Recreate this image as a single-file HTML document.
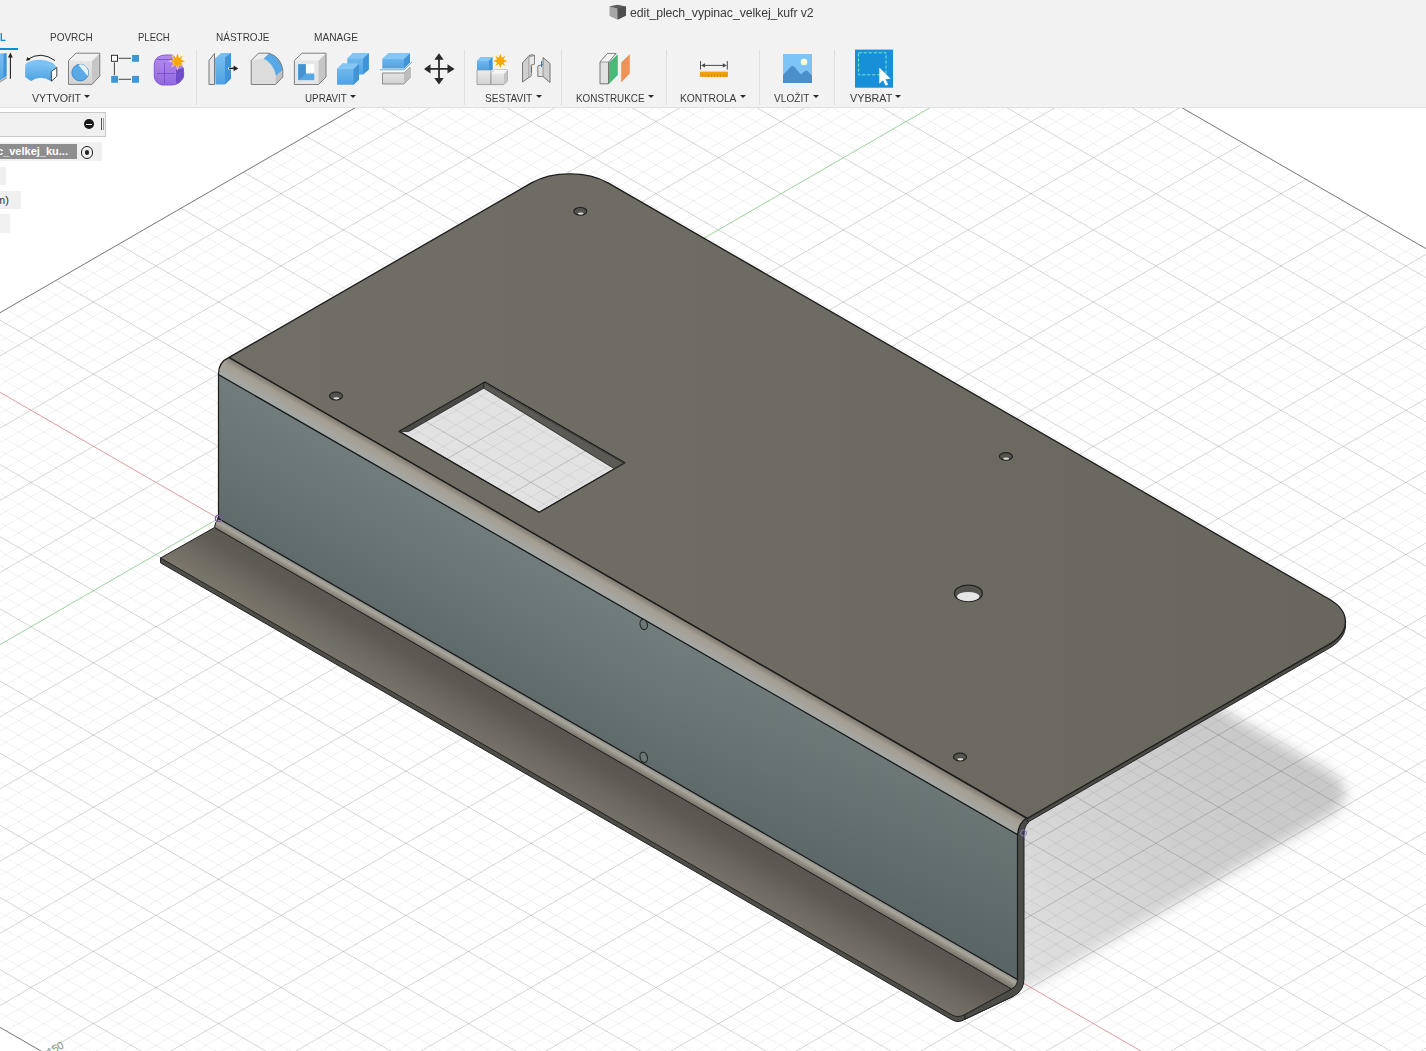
<!DOCTYPE html>
<html><head><meta charset="utf-8"><title>edit_plech_vypinac_velkej_kufr v2</title>
<style>
html,body{margin:0;padding:0;}
body{width:1426px;height:1051px;overflow:hidden;background:#fff;position:relative;font-family:"Liberation Sans",sans-serif;}
#scene{position:absolute;left:0;top:0;width:1426px;height:1051px;}
#toolbar{position:absolute;left:0;top:0;width:1426px;height:107px;background:#f2f2f2;border-bottom:1px solid #e0e0e0;}
.title{position:absolute;left:630px;top:6px;font-size:12px;color:#3c3c3c;white-space:nowrap;letter-spacing:-0.1px;}
.tab{position:absolute;top:31px;font-size:10.5px;color:#3a3a3a;white-space:nowrap;}
.lbl{position:absolute;top:92px;font-size:10.5px;color:#3a3a3a;white-space:nowrap;}
.tab span,.lbl span,.title span{display:inline-block;transform-origin:0 50%;}
.arr{position:absolute;top:95.3px;width:0;height:0;border-left:3.1px solid transparent;border-right:3.1px solid transparent;border-top:3.8px solid #2a2a2a;}
.sep{position:absolute;top:50px;width:1px;height:55px;background:#dedede;}
.ico{position:absolute;top:51px;width:36px;height:36px;}
#browser div{position:absolute;}
</style></head><body>
<svg id="scene" width="1426" height="1051" viewBox="0 0 1426 1051">
<defs>
<clipPath id="gclip"><polygon points="-619.0,670.0 768.5,-130.9 3556.0,1478.2 2168.5,2279.2"/></clipPath>
<filter id="blur" x="-20%" y="-20%" width="140%" height="140%"><feGaussianBlur stdDeviation="6.5"/></filter>
<linearGradient id="faceg" gradientUnits="userSpaceOnUse" x1="218.5" y1="374.5" x2="156.1" y2="482.5">
<stop offset="0" stop-color="#717d7c"/><stop offset="0.5" stop-color="#687574"/><stop offset="1" stop-color="#5f6b6b"/>
</linearGradient>
<linearGradient id="facelr" gradientUnits="userSpaceOnUse" x1="218" y1="0" x2="1018" y2="0">
<stop offset="0" stop-color="#000" stop-opacity="0"/><stop offset="0.55" stop-color="#000" stop-opacity="0"/><stop offset="1" stop-color="#000" stop-opacity="0.07"/>
</linearGradient>
<linearGradient id="plateg" gradientUnits="userSpaceOnUse" x1="230" y1="0" x2="1345" y2="0">
<stop offset="0" stop-color="#716e66"/><stop offset="0.5" stop-color="#6e6b62"/><stop offset="1" stop-color="#69665e"/>
</linearGradient>
<linearGradient id="flg" gradientUnits="userSpaceOnUse" x1="160" y1="0" x2="1012" y2="0">
<stop offset="0" stop-color="#7c786e"/><stop offset="0.4" stop-color="#76726a"/><stop offset="1" stop-color="#777269"/>
</linearGradient>
<linearGradient id="flao" gradientUnits="userSpaceOnUse" x1="214.5" y1="527.5" x2="187.8" y2="573.7">
<stop offset="0" stop-color="#000" stop-opacity="0.25"/><stop offset="0.26" stop-color="#000" stop-opacity="0.22"/><stop offset="0.43" stop-color="#000" stop-opacity="0.165"/><stop offset="0.64" stop-color="#000" stop-opacity="0.095"/><stop offset="0.84" stop-color="#000" stop-opacity="0.045"/><stop offset="1" stop-color="#000" stop-opacity="0.01"/>
</linearGradient>
<linearGradient id="shg" gradientUnits="userSpaceOnUse" x1="1030" y1="960" x2="1290" y2="760">
<stop offset="0" stop-color="#dedede"/><stop offset="0.6" stop-color="#cecece"/><stop offset="1" stop-color="#c8c8c8"/>
</linearGradient>
<linearGradient id="bendg" gradientUnits="userSpaceOnUse" x1="229.1" y1="357.4" x2="218" y2="376.6">
<stop offset="0" stop-color="#7d786e"/><stop offset="0.3" stop-color="#a49e93"/><stop offset="0.6" stop-color="#a6a49c"/><stop offset="0.85" stop-color="#a3a8a6"/><stop offset="1" stop-color="#899190"/>
</linearGradient>
<linearGradient id="bend2g" gradientUnits="userSpaceOnUse" x1="218.5" y1="518.5" x2="213.6" y2="527">
<stop offset="0" stop-color="#868b89"/><stop offset="0.4" stop-color="#aaa69c"/><stop offset="1" stop-color="#7d796f"/>
</linearGradient>
</defs>
<rect width="1426" height="1051" fill="#fff"/>
<!-- shadow -->
<g clip-path="url(#gclip)">
<path d="M229.1,529.4L531.0,355.1C552.4,342.8 587.1,342.8 608.5,355.1L1329.4,771.3C1350.8,783.7 1350.8,803.7 1329.4,816.1L1027.5,990.3Z" fill="url(#shg)" filter="url(#blur)"/>
<path d="M399.2,431.4L484.9,382.0L624.9,462.8L539.2,512.3Z" fill="#e2e2e2"/>
</g>
<!-- grid -->
<g clip-path="url(#gclip)" fill="none">
<path d="M-20.0,1015.8L1446.0,1862.2M-20.0,1001.4L1446.0,1847.8M-20.0,987.0L1446.0,1833.4M-20.0,972.5L1446.0,1818.9M-20.0,943.7L1446.0,1790.1M-20.0,929.3L1446.0,1775.6M-20.0,914.8L1446.0,1761.2M-20.0,900.4L1446.0,1746.8M-20.0,871.5L1446.0,1717.9M-20.0,857.1L1446.0,1703.5M-20.0,842.7L1446.0,1689.0M-20.0,828.2L1446.0,1674.6M-20.0,799.4L1446.0,1645.8M-20.0,784.9L1446.0,1631.3M-20.0,770.5L1446.0,1616.9M-20.0,756.1L1446.0,1602.5M-20.0,727.2L1446.0,1573.6M-20.0,712.8L1446.0,1559.2M-20.0,698.3L1446.0,1544.7M-20.0,683.9L1446.0,1530.3M-20.0,655.0L1446.0,1501.4M-20.0,640.6L1446.0,1487.0M-20.0,626.2L1446.0,1472.6M-20.0,611.7L1446.0,1458.1M-20.0,582.9L1446.0,1429.3M-20.0,568.4L1446.0,1414.8M-20.0,554.0L1446.0,1400.4M-20.0,539.6L1446.0,1386.0M-20.0,510.7L1446.0,1357.1M-20.0,496.3L1446.0,1342.7M-20.0,481.8L1446.0,1328.2M-20.0,467.4L1446.0,1313.8M-20.0,438.5L1446.0,1284.9M-20.0,424.1L1446.0,1270.5M-20.0,409.7L1446.0,1256.1M-20.0,395.2L1446.0,1241.6M-20.0,366.4L1446.0,1212.8M-20.0,351.9L1446.0,1198.3M-20.0,337.5L1446.0,1183.9M-20.0,323.1L1446.0,1169.5M-20.0,294.2L1446.0,1140.6M-20.0,279.8L1446.0,1126.2M-20.0,265.3L1446.0,1111.7M-20.0,250.9L1446.0,1097.3M-20.0,222.0L1446.0,1068.4M-20.0,207.6L1446.0,1054.0M-20.0,193.2L1446.0,1039.6M-20.0,178.7L1446.0,1025.1M-20.0,149.9L1446.0,996.3M-20.0,135.4L1446.0,981.8M-20.0,121.0L1446.0,967.4M-20.0,106.6L1446.0,953.0M-20.0,77.7L1446.0,924.1M-20.0,63.3L1446.0,909.7M-20.0,48.8L1446.0,895.2M-20.0,34.4L1446.0,880.8M-20.0,5.5L1446.0,851.9M-20.0,-8.9L1446.0,837.5M-20.0,-23.3L1446.0,823.1M-20.0,-37.8L1446.0,808.6M-20.0,-66.6L1446.0,779.8M-20.0,-81.0L1446.0,765.3M-20.0,-95.5L1446.0,750.9M-20.0,-109.9L1446.0,736.5M-20.0,-138.8L1446.0,707.6M-20.0,-153.2L1446.0,693.2M-20.0,-167.6L1446.0,678.7M-20.0,-182.1L1446.0,664.3M-20.0,-210.9L1446.0,635.4M-20.0,-225.4L1446.0,621.0M-20.0,-239.8L1446.0,606.6M-20.0,-254.2L1446.0,592.2M-20.0,-283.1L1446.0,563.3M-20.0,-297.5L1446.0,548.9M-20.0,-312.0L1446.0,534.4M-20.0,-326.4L1446.0,520.0M-20.0,-355.3L1446.0,491.1M-20.0,-369.7L1446.0,476.7M-20.0,-384.1L1446.0,462.3M-20.0,-398.6L1446.0,447.8M-20.0,-427.4L1446.0,419.0M-20.0,-441.9L1446.0,404.5M-20.0,-456.3L1446.0,390.1M-20.0,-470.7L1446.0,375.7M-20.0,-499.6L1446.0,346.8M-20.0,-514.0L1446.0,332.4M-20.0,-528.5L1446.0,317.9M-20.0,-542.9L1446.0,303.5M-20.0,-571.8L1446.0,274.6M-20.0,-586.2L1446.0,260.2M-20.0,324.2L1446.0,-522.2M-20.0,338.7L1446.0,-507.7M-20.0,353.1L1446.0,-493.3M-20.0,382.0L1446.0,-464.4M-20.0,396.4L1446.0,-450.0M-20.0,410.8L1446.0,-435.6M-20.0,425.3L1446.0,-421.1M-20.0,454.1L1446.0,-392.3M-20.0,468.6L1446.0,-377.8M-20.0,483.0L1446.0,-363.4M-20.0,497.4L1446.0,-349.0M-20.0,526.3L1446.0,-320.1M-20.0,540.7L1446.0,-305.7M-20.0,555.2L1446.0,-291.2M-20.0,569.6L1446.0,-276.8M-20.0,598.5L1446.0,-247.9M-20.0,612.9L1446.0,-233.5M-20.0,627.3L1446.0,-219.1M-20.0,641.8L1446.0,-204.6M-20.0,670.6L1446.0,-175.8M-20.0,685.1L1446.0,-161.3M-20.0,699.5L1446.0,-146.9M-20.0,713.9L1446.0,-132.5M-20.0,742.8L1446.0,-103.6M-20.0,757.2L1446.0,-89.2M-20.0,771.7L1446.0,-74.7M-20.0,786.1L1446.0,-60.3M-20.0,815.0L1446.0,-31.4M-20.0,829.4L1446.0,-17.0M-20.0,843.8L1446.0,-2.6M-20.0,858.3L1446.0,11.9M-20.0,887.1L1446.0,40.7M-20.0,901.6L1446.0,55.2M-20.0,916.0L1446.0,69.6M-20.0,930.4L1446.0,84.0M-20.0,959.3L1446.0,112.9M-20.0,973.7L1446.0,127.3M-20.0,988.2L1446.0,141.8M-20.0,1002.6L1446.0,156.2M-20.0,1031.5L1446.0,185.1M-20.0,1045.9L1446.0,199.5M-20.0,1060.3L1446.0,213.9M-20.0,1074.8L1446.0,228.4M-20.0,1103.6L1446.0,257.2M-20.0,1118.0L1446.0,271.7M-20.0,1132.5L1446.0,286.1M-20.0,1146.9L1446.0,300.5M-20.0,1175.8L1446.0,329.4M-20.0,1190.2L1446.0,343.8M-20.0,1204.6L1446.0,358.3M-20.0,1219.1L1446.0,372.7M-20.0,1247.9L1446.0,401.6M-20.0,1262.4L1446.0,416.0M-20.0,1276.8L1446.0,430.4M-20.0,1291.2L1446.0,444.8M-20.0,1320.1L1446.0,473.7M-20.0,1334.5L1446.0,488.1M-20.0,1349.0L1446.0,502.6M-20.0,1363.4L1446.0,517.0M-20.0,1392.3L1446.0,545.9M-20.0,1406.7L1446.0,560.3M-20.0,1421.1L1446.0,574.7M-20.0,1435.6L1446.0,589.2M-20.0,1464.4L1446.0,618.0M-20.0,1478.9L1446.0,632.5M-20.0,1493.3L1446.0,646.9M-20.0,1507.7L1446.0,661.3M-20.0,1536.6L1446.0,690.2M-20.0,1551.0L1446.0,704.6M-20.0,1565.5L1446.0,719.1M-20.0,1579.9L1446.0,733.5M-20.0,1608.8L1446.0,762.4M-20.0,1623.2L1446.0,776.8M-20.0,1637.6L1446.0,791.2M-20.0,1652.1L1446.0,805.7M-20.0,1680.9L1446.0,834.5M-20.0,1695.4L1446.0,849.0M-20.0,1709.8L1446.0,863.4M-20.0,1724.2L1446.0,877.8M-20.0,1753.1L1446.0,906.7M-20.0,1767.5L1446.0,921.1M-20.0,1782.0L1446.0,935.6M-20.0,1796.4L1446.0,950.0M-20.0,1825.3L1446.0,978.9M-20.0,1839.7L1446.0,993.3M-20.0,1854.1L1446.0,1007.7M-20.0,1868.6L1446.0,1022.2M-20.0,1897.4L1446.0,1051.0M-20.0,1911.9L1446.0,1065.5M-20.0,1926.3L1446.0,1079.9M-20.0,1940.7L1446.0,1094.3M-20.0,1969.6L1446.0,1123.2M-20.0,1984.0L1446.0,1137.6M-20.0,1998.5L1446.0,1152.1M-20.0,2012.9L1446.0,1166.5M-20.0,2041.8L1446.0,1195.4M-20.0,2056.2L1446.0,1209.8M-20.0,2070.6L1446.0,1224.2M-20.0,2085.1L1446.0,1238.7M-20.0,2113.9L1446.0,1267.5M-20.0,2128.4L1446.0,1282.0M-20.0,2142.8L1446.0,1296.4M-20.0,2157.2L1446.0,1310.8M-20.0,2186.1L1446.0,1339.7M-20.0,2200.5L1446.0,1354.1M-20.0,2214.9L1446.0,1368.6M-20.0,2229.4L1446.0,1383.0M-20.0,2258.2L1446.0,1411.9M-20.0,2272.7L1446.0,1426.3M-20.0,2287.1L1446.0,1440.7M-20.0,2301.5L1446.0,1455.2M-20.0,2330.4L1446.0,1484.0M-20.0,2344.8L1446.0,1498.4M-20.0,2359.3L1446.0,1512.9M-20.0,2373.7L1446.0,1527.3M-20.0,2402.6L1446.0,1556.2M-20.0,2417.0L1446.0,1570.6M-20.0,2431.4L1446.0,1585.0M-20.0,2445.9L1446.0,1599.5M-20.0,2474.7L1446.0,1628.3M-20.0,2489.2L1446.0,1642.8M-20.0,2503.6L1446.0,1657.2M-20.0,2518.0L1446.0,1671.6M-20.0,2546.9L1446.0,1700.5M-20.0,2561.3L1446.0,1714.9M-20.0,2575.8L1446.0,1729.4M-20.0,2590.2L1446.0,1743.8M-20.0,2619.1L1446.0,1772.7M-20.0,2633.5L1446.0,1787.1M-20.0,2647.9L1446.0,1801.5M-20.0,2662.4L1446.0,1816.0" stroke="#000" stroke-opacity="0.06" stroke-width="1"/>
<path d="M-20.0,958.1L1446.0,1804.5M-20.0,886.0L1446.0,1732.3M-20.0,813.8L1446.0,1660.2M-20.0,741.6L1446.0,1588.0M-20.0,669.5L1446.0,1515.9M-20.0,597.3L1446.0,1443.7M-20.0,525.1L1446.0,1371.5M-20.0,453.0L1446.0,1299.4M-20.0,380.8L1446.0,1227.2M-20.0,308.6L1446.0,1155.0M-20.0,236.5L1446.0,1082.9M-20.0,164.3L1446.0,1010.7M-20.0,92.1L1446.0,938.5M-20.0,20.0L1446.0,866.4M-20.0,-52.2L1446.0,794.2M-20.0,-124.3L1446.0,722.0M-20.0,-196.5L1446.0,649.9M-20.0,-268.7L1446.0,577.7M-20.0,-340.8L1446.0,505.6M-20.0,-413.0L1446.0,433.4M-20.0,-485.2L1446.0,361.2M-20.0,-557.3L1446.0,289.1M-20.0,367.5L1446.0,-478.9M-20.0,439.7L1446.0,-406.7M-20.0,511.9L1446.0,-334.5M-20.0,584.0L1446.0,-262.4M-20.0,656.2L1446.0,-190.2M-20.0,728.4L1446.0,-118.0M-20.0,800.5L1446.0,-45.9M-20.0,872.7L1446.0,26.3M-20.0,944.9L1446.0,98.5M-20.0,1017.0L1446.0,170.6M-20.0,1089.2L1446.0,242.8M-20.0,1161.3L1446.0,315.0M-20.0,1233.5L1446.0,387.1M-20.0,1305.7L1446.0,459.3M-20.0,1377.8L1446.0,531.4M-20.0,1450.0L1446.0,603.6M-20.0,1522.2L1446.0,675.8M-20.0,1594.3L1446.0,747.9M-20.0,1666.5L1446.0,820.1M-20.0,1738.7L1446.0,892.3M-20.0,1810.8L1446.0,964.4M-20.0,1883.0L1446.0,1036.6M-20.0,1955.2L1446.0,1108.8M-20.0,2027.3L1446.0,1180.9M-20.0,2099.5L1446.0,1253.1M-20.0,2171.6L1446.0,1325.3M-20.0,2243.8L1446.0,1397.4M-20.0,2316.0L1446.0,1469.6M-20.0,2388.1L1446.0,1541.7M-20.0,2460.3L1446.0,1613.9M-20.0,2532.5L1446.0,1686.1M-20.0,2604.6L1446.0,1758.2" stroke="#000" stroke-opacity="0.165" stroke-width="1"/>
<path d="M-69.0,352.5L2718.5,1961.7" stroke="#ee7a80" stroke-opacity="0.55" stroke-width="1"/>
<path d="M-331.5,836.0L1056.0,35.0" stroke="#78dc78" stroke-opacity="0.55" stroke-width="1"/>
</g>
<path d="M-619.0,670.0L768.5,-130.9M768.5,-130.9L3556.0,1478.2M-619.0,670.0L2168.5,2279.2" stroke="#777" stroke-width="1" fill="none"/>
<text x="49.5" y="1056" font-family="Liberation Sans, sans-serif" font-size="10.5" fill="#8a8a8a" transform="rotate(-30 49.5 1056)">150</text><text x="-4" y="1010" font-family="Liberation Sans, sans-serif" font-size="10.5" fill="#8a8a8a" transform="rotate(-30 -4 1010)">0</text>

<!-- plate thickness -->
<path d="M229.1,361.4L531.0,187.1C552.4,174.8 587.1,174.8 608.5,187.1L1329.4,603.3C1350.8,615.7 1350.8,635.7 1329.4,648.1L1027.5,822.3Z M399.2,431.4L484.9,382.0L624.9,462.8L539.2,512.3Z" fill-rule="evenodd" fill="#4e4c46" stroke="#222" stroke-width="1" stroke-linejoin="round"/>
<!-- flange -->
<path d="M160.5,558 L160.5,562.8 L951.1,1019.3 Q958,1023.8 964.9,1019.3 L1013,996.5 L1011.5,989 Z" fill="#4f4d47" stroke="#222" stroke-width="1" stroke-linejoin="round"/>
<!-- end face (sheet thickness seen from right) -->
<path d="M1026.5,818.2 L1028.5,822.5 Q1024,826 1024,835 L1024,979 Q1024,991 1013,996.5 L964.9,1019.3 L964.9,1014.5 L1011.5,989 Q1017.5,986 1017.5,979.5 L1017.5,834.5 Q1018,824 1026.5,818.2 Z" fill="#4b4b48" stroke="#222" stroke-width="1" stroke-linejoin="round"/>
<path d="M160.5,558 L214.5,527.5 L1011.5,989 L964.9,1014.5 Q958,1018.5 951.1,1014.5 Z" fill="url(#flg)"/>
<path d="M160.5,558 L214.5,527.5 L1011.5,989 L964.9,1014.5 Q958,1018.5 951.1,1014.5 Z" fill="url(#flao)" stroke="#222" stroke-width="1" stroke-linejoin="round"/>
<!-- lower bend -->
<path d="M218.5,518.5 L1017.5,979.5 Q1017.5,986 1011.5,989 L214.5,527.5 Q215,522 218.5,518.5 Z" fill="url(#bend2g)" stroke="#222" stroke-width="1" stroke-linejoin="round"/>
<!-- vertical face -->
<path d="M218.5,374.5 L1017.5,834.5 L1017.5,979.5 L218.5,518.5 Z" fill="url(#faceg)"/>
<path d="M218.5,374.5 L1017.5,834.5 L1017.5,979.5 L218.5,518.5 Z" fill="url(#facelr)" stroke="#1c1c1c" stroke-width="1.2" stroke-linejoin="round"/>
<!-- upper bend -->
<path d="M229.1,357.4 L1026.5,818.2 Q1019,822 1017.5,834.5 L218.4,374.5 Q218.4,362 229.1,357.4 Z" fill="url(#bendg)" stroke="#1c1c1c" stroke-width="1.2" stroke-linejoin="round"/>
<!-- cutout inner walls: draw plate with hole, then walls -->
<path d="M229.1,357.4L531.0,183.1C552.4,170.8 587.1,170.8 608.5,183.1L1329.4,599.3C1350.8,611.7 1350.8,631.7 1329.4,644.1L1027.5,818.3Z M399.2,431.4L484.9,382.0L624.9,462.8L539.2,512.3Z" fill="url(#plateg)" fill-rule="evenodd" stroke="#1c1c1c" stroke-width="1.3" stroke-linejoin="round"/>
<!-- cutout walls -->
<path d="M398.9,431.6 L483.8,382.7 L483.8,388.2 L408.5,431.6 Z" fill="#4a4945" stroke="#222" stroke-width="0.8"/>
<path d="M483.8,382.7 L623.7,463.2 L614.2,468.7 L483.8,388.2 Z" fill="#5b5a55" stroke="#222" stroke-width="0.8"/>

<!-- holes on plate -->
<g stroke="#222" stroke-width="1.2">
<ellipse cx="580.3" cy="211.3" rx="6.5" ry="3.8" fill="#55534d"/>
<ellipse cx="336" cy="396" rx="6.5" ry="3.8" fill="#55534d"/>
<ellipse cx="1005.9" cy="456.4" rx="6.5" ry="3.8" fill="#55534d"/>
<ellipse cx="960" cy="757" rx="6.5" ry="3.8" fill="#55534d"/>
<ellipse cx="968.4" cy="593.4" rx="14" ry="8.2" fill="#55534d"/>
</g>
<ellipse cx="968.2" cy="596.6" rx="11.3" ry="4.6" fill="#e6e6e6"/>
<ellipse cx="580.6" cy="213.6" rx="3" ry="1.1" fill="#ddd"/>
<ellipse cx="336.3" cy="398.3" rx="3" ry="1.1" fill="#ddd"/>
<ellipse cx="1006.2" cy="458.7" rx="3" ry="1.1" fill="#ddd"/>
<ellipse cx="960.3" cy="759.3" rx="3" ry="1.1" fill="#ddd"/>
<!-- holes on face -->
<g stroke="#222" stroke-width="1.1" fill="#6b7877">
<ellipse cx="643.7" cy="624.5" rx="3.6" ry="5.2" transform="rotate(-15 643.7 624.5)"/>
<ellipse cx="643.7" cy="757.3" rx="3.6" ry="5.2" transform="rotate(-15 643.7 757.3)"/>
</g>
<!-- origin markers -->
<circle cx="218.5" cy="518.5" r="3.2" fill="none" stroke="#7a5aa0" stroke-width="1.2"/>
<circle cx="218.5" cy="518.5" r="1.2" fill="#222"/>
<circle cx="1023.5" cy="833" r="3" fill="none" stroke="#8a78c8" stroke-width="1"/>
</svg>

<div id="toolbar">
<!-- title -->
<svg style="position:absolute;left:608px;top:4px" width="20" height="18" viewBox="0 0 20 18"><path d="M1.8,2.2 L9.5,0.8 L18,2.6 L18,11.5 L9.8,15.6 L1.8,11.8 Z" fill="#5c5c5c"/><path d="M1.8,2.6 L9.6,4.6 L9.8,15.6 L1.8,11.8 Z" fill="#a6a6a6"/><path d="M9.6,4.6 L18,2.6 L18,11.5 L9.8,15.6 Z" fill="#4e4e4e"/></svg>
<div class="title"><span style="transform:scaleX(1.0263)">edit_plech_vypinac_velkej_kufr v2</span></div>
<div class="tab" style="left:-0.5px;color:#0a8fd6;font-weight:bold;"><span style="transform:scaleX(0.9)">L</span></div>
<div class="tab" style="left:50.1px;"><span style="transform:scaleX(0.9488)">POVRCH</span></div>
<div class="tab" style="left:138.0px;"><span style="transform:scaleX(0.9057)">PLECH</span></div>
<div class="tab" style="left:216.4px;"><span style="transform:scaleX(0.9518)">NÁSTROJE</span></div>
<div class="tab" style="left:314.4px;"><span style="transform:scaleX(0.9670)">MANAGE</span></div>
<div style="position:absolute;left:0;top:47.6px;width:18.4px;height:2.4px;background:#0a8fd6"></div>
<div class="lbl" style="left:31.5px"><span style="transform:scaleX(1.0145)">VYTVOřIT</span></div><div class="arr" style="left:84.3px"></div>
<div class="lbl" style="left:304.7px"><span style="transform:scaleX(0.9351)">UPRAVIT</span></div><div class="arr" style="left:350.1px"></div>
<div class="lbl" style="left:484.5px"><span style="transform:scaleX(0.9593)">SESTAVIT</span></div><div class="arr" style="left:535.7px"></div>
<div class="lbl" style="left:576.4px"><span style="transform:scaleX(0.9396)">KONSTRUKCE</span></div><div class="arr" style="left:648.3px"></div>
<div class="lbl" style="left:680.4px"><span style="transform:scaleX(0.9775)">KONTROLA</span></div><div class="arr" style="left:740.3px"></div>
<div class="lbl" style="left:773.9px"><span style="transform:scaleX(0.9647)">VLOŽIT</span></div><div class="arr" style="left:812.5px"></div>
<div class="lbl" style="left:849.5px"><span style="transform:scaleX(1.0267)">VYBRAT</span></div><div class="arr" style="left:895.2px"></div>
<div class="sep" style="left:196px"></div>
<div class="sep" style="left:464.3px"></div>
<div class="sep" style="left:561.3px"></div>
<div class="sep" style="left:665.8px"></div>
<div class="sep" style="left:759.2px"></div>
<div class="sep" style="left:833.6px"></div>
<!--ICONS_START--><svg style="position:absolute;left:0;top:0" width="1426" height="107" viewBox="0 0 1426 107">
<defs>
<linearGradient id="bl" x1="0" y1="0" x2="0" y2="1"><stop offset="0" stop-color="#7cc0f2"/><stop offset="1" stop-color="#4ea2e2"/></linearGradient>
<linearGradient id="gr" x1="0" y1="0" x2="0" y2="1"><stop offset="0" stop-color="#ededed"/><stop offset="1" stop-color="#d2d2d2"/></linearGradient>
<linearGradient id="pu" x1="0" y1="0" x2="0" y2="1"><stop offset="0" stop-color="#b48cf0"/><stop offset="1" stop-color="#9468e0"/></linearGradient>
<g id="star"><path d="M0,-9 L1.8,-3.6 L6.4,-6.4 L3.6,-1.8 L9,0 L3.6,1.8 L6.4,6.4 L1.8,3.6 L0,9 L-1.8,3.6 L-6.4,6.4 L-3.6,1.8 L-9,0 L-3.6,-1.8 L-6.4,-6.4 L-1.8,-3.6 Z" fill="#fff6c0"/><path d="M0,-7.6 L1.6,-3.2 L5.4,-5.4 L3.2,-1.6 L7.6,0 L3.2,1.6 L5.4,5.4 L1.6,3.2 L0,7.6 L-1.6,3.2 L-5.4,5.4 L-3.2,1.6 L-7.6,0 L-3.2,-1.6 L-5.4,-5.4 L-1.6,-3.2 Z" fill="#f7a700"/></g>
</defs>
<!-- 1 extrude (partial) -->
<path d="M-2,53.5 L6.5,53 L6.5,76 L-2,82 Z" fill="url(#bl)"/>
<path d="M3.5,54 L6.5,53 L6.5,76 L3.5,78 Z" fill="#3f94d8"/>
<path d="M-2,82 L6.8,76.5 L6.8,78.5 L-2,84 Z" fill="#a8a8a8"/>
<path d="M10.4,56 L10.4,78.8" stroke="#222" stroke-width="1.1"/><path d="M8,57.6 L10.4,52.4 L12.8,57.6 Z" fill="#222"/>
<!-- 2 revolve -->
<path d="M25.3,64.5 Q26,63 28,62.2 Q40,57 53,63 L56.8,67.2 L56.8,76 L51.4,81.3 Q40.5,74.5 31,81 L25.3,77 Z" fill="#7cc2f4"/>
<path d="M25.3,67.5 Q39,60.5 51.3,68.5 L51.4,81.3 Q40.5,74.5 31,81 L25.3,77 Z" fill="url(#bl)"/>
<path d="M51.3,71.5 L56.8,67.4 L56.8,76.2 L51.5,81.2 Z" fill="#fff" stroke="#333" stroke-width="0.9" stroke-linejoin="round"/>
<path d="M27.5,59.5 Q41,50.5 55,60.5" fill="none" stroke="#222" stroke-width="1"/><path d="M26,60.8 L27.5,57 L30.3,59.9 Z" fill="#222"/>
<!-- 3 hole -->
<path d="M68.5,60.5 L76,53.2 L99.8,53.2 L99.8,76 L92,84.4 L68.5,84.4 Z" fill="url(#gr)"/>
<path d="M92,61 L99.8,53.2 L99.8,76 L92,84.4 Z" fill="#c6c6c6"/>
<path d="M68.5,60.5 L76,53.2 L99.8,53.2 L92,61 Z" fill="#f2f2f2"/>
<path d="M68.5,60.5 L76,53.2 L99.8,53.2 L99.8,76 L92,84.4 L68.5,84.4 Z" fill="none" stroke="#747474" stroke-width="0.9" stroke-linejoin="round"/>
<circle cx="80.2" cy="72.6" r="8.3" fill="#5aaae8" stroke="#3b86c6" stroke-width="0.9"/>
<path d="M80.2,64.3 A8.3,8.3 0 0 1 87.6,76 L78.5,65 Z" fill="#e6f2fc"/>
<!-- 4 pattern -->
<path d="M118.6,58.3 H131 M114.4,62.4 V75.2 M118.6,79.3 H131" stroke="#444" stroke-width="1" fill="none"/>
<rect x="111.5" y="55.3" width="6" height="6" fill="#fff" stroke="#333" stroke-width="1"/>
<rect x="132" y="55" width="7" height="6.8" fill="#3f97d8"/>
<rect x="111.2" y="75.9" width="6.8" height="6.9" fill="#3f97d8"/>
<rect x="132" y="75.9" width="7" height="6.9" fill="#3f97d8"/>
<!-- 5 form -->
<path d="M154.3,64 Q155,55.2 166,55 L172,55 Q183.5,62 183.7,72 L183.5,77 Q180,84.8 172,85 L162,85 Q154.5,83 154.3,76 Z" fill="url(#pu)" stroke="#7a4fd0" stroke-width="0.9"/>
<path d="M176,70 L183.5,68 L183.5,77 Q181,82 176,83.5 Z" fill="#6f4cc8"/>
<path d="M157,59.5 H172 M164.5,63 V83 M157,73.5 H175" stroke="#6a3fc0" stroke-width="0.8" fill="none" opacity="0.8"/>
<use href="#star" transform="translate(177.5,61.2)"/>
<!-- 6 press pull -->
<path d="M209,60.5 L214.5,53.5 L214.5,84.5 L209,84.5 Z" fill="#e4e4e4" stroke="#6a6a6a" stroke-width="0.9" stroke-linejoin="round"/>
<path d="M215,58.5 L221,53 L231,53 L231,78.5 L224.5,84.5 L215.5,84.5 Z" fill="url(#bl)"/>
<path d="M225,57.5 L231,53 L231,78.5 L225,84.5 Z" fill="#3f94d8"/>
<path d="M228.5,68.4 H235" stroke="#222" stroke-width="1.3"/><path d="M233.6,65.6 L238.4,68.4 L233.6,71.2 Z" fill="#222"/>
<path d="M228,67.5 h4 v1.9 h-4 Z" fill="#fff"/>
<path d="M229,68.4 H235" stroke="#222" stroke-width="1.3"/>
<!-- 7 fillet -->
<path d="M251.2,60.5 L258.5,53.2 L269,53.2 Q281,57 282.8,70 L282.8,77 L275.5,84.5 L251.2,84.5 Z" fill="#dcdcdc"/>
<path d="M263.5,58.5 L269,53.2 Q281,57 282.8,70 L276,76 Q274,63.5 263.5,58.5 Z" fill="#58a8e6"/>
<path d="M276,76 L282.8,70 L282.8,77 L275.5,84.5 Z" fill="#c2c2c2"/>
<path d="M251.2,60.5 L258.5,53.2 L269,53.2 L263.5,58.5 Z" fill="#ececec"/>
<path d="M251.2,60.5 L258.5,53.2 L269,53.2 Q281,57 282.8,70 L282.8,77 L275.5,84.5 L251.2,84.5 Z" fill="none" stroke="#747474" stroke-width="0.9" stroke-linejoin="round"/>
<!-- 8 shell -->
<path d="M294.4,60.5 L302,53.2 L326,53.2 L326,77 L318.5,84.5 L294.4,84.5 Z" fill="#e6e6e6"/>
<path d="M318.5,60.5 L326,53.2 L326,77 L318.5,84.5 Z" fill="#c6c6c6"/>
<path d="M294.4,60.5 L302,53.2 L326,53.2 L318.5,60.5 Z" fill="#f2f2f2"/>
<rect x="298.3" y="64.3" width="16" height="16" fill="#fff"/>
<path d="M298.3,64.3 H305.8 V73.5 H314.3 V80.3 H298.3 Z" fill="#58a8e6"/>
<path d="M298.3,64.3 H305.8 V73.5 L302.5,77 Z M298.3,64.3 L302.5,77 L298.3,80.3Z" fill="#3f94d8"/>
<path d="M294.4,60.5 L302,53.2 L326,53.2 L326,77 L318.5,84.5 L294.4,84.5 Z" fill="none" stroke="#747474" stroke-width="0.9" stroke-linejoin="round"/>
<!-- 9 combine -->
<path d="M347.3,58.5 L353,53 L368.8,53 L368.8,69.5 L363,74.5 L347.3,74.5 Z" fill="url(#bl)"/>
<path d="M363,58.5 L368.8,53 L368.8,69.5 L363,74.5 Z" fill="#3f94d8"/>
<path d="M337,69 L342.5,63.4 L359,63.4 L359,79.5 L353.5,84.8 L337,84.8 Z" fill="url(#bl)"/>
<path d="M353.5,69 L359,63.4 L359,79.5 L353.5,84.8 Z" fill="#3f94d8"/>
<path d="M337,69 L342.5,63.4 L359,63.4 L353.5,69 Z" fill="#86c6f4"/>
<path d="M347.3,58.5 L353,53 L368.8,53 L363,58.5 Z" fill="#86c6f4"/>
<!-- 10 split body -->
<path d="M382.3,59 L388.5,53 L410,53 L410,62.5 L404,68.6 L382.3,68.6 Z" fill="url(#bl)"/>
<path d="M404,59 L410,53 L410,62.5 L404,68.6 Z" fill="#3f94d8"/>
<path d="M382.3,59 L388.5,53 L410,53 L404,59 Z" fill="#86c6f4"/>
<path d="M380,71.3 L404.5,71.3 L412.5,63.5" fill="none" stroke="#fff" stroke-width="1.6"/>
<path d="M380,69.8 L404,69.8 L412,62" fill="none" stroke="#58a8e6" stroke-width="0.9"/>
<path d="M382.5,73 L404,73 L410,67.5 L410,78 L404,84 L382.5,84 Z" fill="url(#gr)" stroke="#7a7a7a" stroke-width="0.8" stroke-linejoin="round"/>
<path d="M404,73 L410,67.5 L410,78 L404,84 Z" fill="#bdbdbd"/>
<!-- 11 move -->
<path d="M439,57 V81 M428,68.9 H450" stroke="#2a2a2a" stroke-width="1.8" fill="none"/>
<path d="M434.3,59.8 L439,53.2 L443.7,59.8 Z M434.3,78 L439,84.5 L443.7,78 Z M430.5,64.3 L424,68.9 L430.5,73.5 Z M447.5,64.3 L454.6,68.9 L447.5,73.5 Z" fill="#2a2a2a"/>
<!-- 12 new component -->
<path d="M477,61 L481,57 L492.5,57 L492.5,70 L477,70 Z" fill="url(#bl)"/>
<path d="M477,70 H491 V84.6 H477 Z" fill="url(#gr)" stroke="#8a8a8a" stroke-width="0.7"/>
<path d="M491,73.5 L494.5,70 L507.5,70 L507.5,81 L504,84.6 L491,84.6 Z" fill="url(#gr)" stroke="#8a8a8a" stroke-width="0.7" stroke-linejoin="round"/>
<path d="M504,73.5 L507.5,70 L507.5,81 L504,84.6 Z" fill="#c4c4c4"/>
<path d="M491,73.5 L494.5,70 L507.5,70 L504,73.5 Z" fill="#f6f6f6"/>
<path d="M477,61 L481,57 L492.5,57 L489,61 Z" fill="#86c6f4"/>
<path d="M489,61 L492.5,57 L492.5,70 L489,70 Z" fill="#3f94d8"/>
<use href="#star" transform="translate(500.3,60.9) scale(0.95)"/>
<!-- 13 joint -->
<path d="M522.5,63 L529,55.5 Q532,54 534.5,55.5 L534.5,64 L531,65 L531,76 L522.5,82 Z" fill="#cfcfcf" stroke="#6a6a6a" stroke-width="0.9" stroke-linejoin="round"/>
<path d="M529,57 L534.5,55.5 L534.5,64 L531,65 L531,76 L529,77.5 Z" fill="#e8e8e8" stroke="#6a6a6a" stroke-width="0.6"/>
<path d="M543,57.5 L550,63.5 L550,82.5 L543,76.5 L538,76.5 L538,66 L543,64.5 Z" fill="#cfcfcf" stroke="#6a6a6a" stroke-width="0.9" stroke-linejoin="round"/>
<path d="M538,66 L543,64.5 L543,76.5 L538,76.5 Z" fill="#e2e2e2" stroke="#6a6a6a" stroke-width="0.6"/>
<path d="M531.5,66.5 V72.5 M541.5,61 V67" stroke="#2d6ea8" stroke-width="0.9"/>
<!-- 14 construction -->
<path d="M600,62 L607.5,53.5 L616,53.5 L608.5,62 L608.5,83.8 L600,83.8 Z" fill="#e2e2e2" stroke="#6a6a6a" stroke-width="0.9" stroke-linejoin="round"/>
<path d="M600,62 L607.5,53.5 L616,53.5 L608.5,62 Z" fill="#f4f4f4" stroke="#6a6a6a" stroke-width="0.6" stroke-linejoin="round"/>
<path d="M609,62.5 L617.8,54.2 L617.8,75 L609,84 Z" fill="#4cb878"/>
<path d="M621.2,62.5 L629.8,54.2 L629.8,73.5 L621.2,82.5 Z" fill="#ee9258"/>
<!-- 15 measure -->
<rect x="699.8" y="71.6" width="28.2" height="5.3" fill="#f2a10e"/>
<path d="M702.5,74 v2.9 M705.5,74.6 v2.3 M708.5,74 v2.9 M711.5,74.6 v2.3 M714.5,74 v2.9 M717.5,74.6 v2.3 M720.5,74 v2.9 M723.5,74.6 v2.3 M726,74 v2.9" stroke="#c47a00" stroke-width="0.7"/>
<path d="M700.5,61 V69.5 M727.3,61 V69.5 M703,65.4 H725" stroke="#4a4a4a" stroke-width="1" fill="none"/>
<path d="M701,65.4 L705,63.2 L705,67.6 Z M726.8,65.4 L722.8,63.2 L722.8,67.6 Z" fill="#4a4a4a"/>
<!-- 16 insert -->
<rect x="783" y="54" width="29" height="29" fill="#7cc3f6"/>
<path d="M783,75 L791,66.5 Q792.5,65.3 794,66.5 L801,74.5 L805,71 Q806.3,70 807.5,71 L812,75.5 L812,83 L783,83 Z" fill="#4a8fca"/>
<circle cx="804" cy="62" r="3.3" fill="#fffbd2"/>
<!-- 17 select -->
<rect x="855" y="49.6" width="38" height="38.1" fill="#1790d8"/>
<rect x="858.6" y="52.8" width="27.4" height="22" fill="none" stroke="#7fe6c8" stroke-width="1" stroke-dasharray="3.2 1.8"/>
<path d="M879.3,67.5 L879.3,83.8 L883,80.3 L885.6,85.8 L888.2,84.6 L885.6,79.2 L890.6,78.8 Z" fill="#fff"/>
</svg>
<!--ICONS_END-->
</div>

<div id="browser">
<div style="left:-1px;top:112px;width:105px;height:23px;background:#f0f0f0;border:1px solid #c9c9c9;"></div>
<div style="left:84px;top:119px;width:10px;height:10px;border-radius:50%;background:#1a1a1a;"></div>
<div style="left:86px;top:123.5px;width:6px;height:1.5px;background:#fff;"></div>
<div style="left:101px;top:118px;width:1px;height:12px;background:#555;"></div>
<div style="left:103px;top:118px;width:1px;height:12px;background:#999;"></div>
<div style="left:0;top:142px;width:102px;height:19px;background:#f0f0f0;"></div>
<div style="left:0;top:144px;width:77px;height:15px;background:#8e8e8e;color:#fff;font-weight:bold;font-size:11px;line-height:15px;white-space:nowrap;overflow:hidden;"><span style="margin-left:-3px">c_velkej_ku...</span></div>
<div style="left:81px;top:146.2px;width:12.4px;height:12.4px;border-radius:50%;border:1.3px solid #222;box-sizing:border-box;"></div>
<div style="left:84.9px;top:150.1px;width:4.6px;height:4.6px;border-radius:50%;background:#222;"></div>
<div style="left:0;top:167px;width:6px;height:18px;background:#f0f0f0;"></div>
<div style="left:0;top:191px;width:21px;height:18px;background:#f0f0f0;font-size:11px;line-height:18px;color:#333;"><span style="margin-left:-4px">m)</span></div>
<div style="left:0;top:214px;width:10px;height:19px;background:#f0f0f0;"></div>
</div>
</body></html>
